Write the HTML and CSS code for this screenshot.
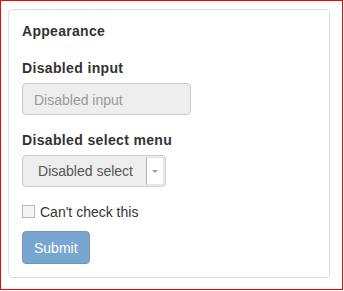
FILE: index.html
```html
<!DOCTYPE html>
<html lang="en">
<head>
    <meta charset="UTF-8">
    <meta name="viewport" content="width=device-width, initial-scale=1.0">
    <title>Appearance</title>
    <link rel="stylesheet" href="styles.css">
</head>
<body>
    <div class="frame">
        <form class="panel">
            <div class="legend">Appearance</div>
            <div class="group">
                <label class="label">Disabled input</label>
                <div class="input">Disabled input</div>
            </div>
            <div class="group">
                <label class="label">Disabled select menu</label>
                <div class="select">
                    <span class="select-text">Disabled select</span>
                    <span class="select-btn"><span class="arrow"></span></span>
                </div>
            </div>
            <div class="check">
                <span class="box"></span>
                <span>Can't check this</span>
            </div>
            <div class="btn">Submit</div>
        </form>
    </div>
</body>
</html>
```

FILE: styles.css
```css
body{
    margin: 0;
    font-family: "Liberation Sans", Arial, Helvetica, sans-serif;
    font-size: 14px;
    line-height: 20px;
    color: #333333;
    background: #ffffff;
}

.frame{
    box-sizing: border-box;
    width: 343px;
    height: 290px;
    border: 1px solid #ff0000;
    padding: 8px 12px 0 7px;
}

.panel{
    display: block;
    box-sizing: border-box;
    width: 322px;
    border: 1px solid #dddddd;
    border-radius: 4px;
    padding: 11px 13px 13px 13px;
    margin: 0;
}

.legend{
    font-weight: bold;
    letter-spacing: 0.3px;
    margin-bottom: 17px;
}

.group{
    margin-bottom: 15px;
}

.label{
    display: block;
    font-weight: bold;
    letter-spacing: 0.35px;
    margin-bottom: 5px;
}

.input{
    box-sizing: border-box;
    width: 169px;
    height: 32px;
    padding: 6px 11px;
    border: 1px solid #cccccc;
    border-radius: 4px;
    background: #eeeeee;
    color: #999999;
}

.select{
    box-sizing: border-box;
    display: flex;
    width: 144px;
    height: 32px;
    border: 1px solid #cccccc;
    border-radius: 4px;
    background: #eeeeee;
}

.select-text{
    flex: 1;
    text-align: center;
    font-size: 14px;
    line-height: 30px;
    color: #555555;
    padding-left: 2px;
}

.select-btn{
    box-sizing: border-box;
    width: 18px;
    margin: 1px 1px 1px 0;
    border: 1px solid #e4e4e4;
    border-left: 1px solid #b4b4b4;
    background: #ffffff;
    display: flex;
    align-items: center;
    justify-content: center;
}

.arrow{
    width: 0;
    height: 0;
    border-left: 3px solid transparent;
    border-right: 3px solid transparent;
    border-top: 3px solid #a0a0a0;
}

.check{
    display: flex;
    align-items: flex-start;
    margin-bottom: 9px;
}

.box{
    box-sizing: border-box;
    width: 13px;
    height: 13px;
    margin: 3px 5px 0 0;
    border: 1px solid #b8b8b8;
    background: #f4f4f4;
}

.btn{
    display: inline-block;
    box-sizing: border-box;
    height: 33px;
    padding: 6px 11px;
    border: 1px solid #6f97bd;
    border-radius: 4px;
    background: #77a6d0;
    color: #ffffff;
}
```
